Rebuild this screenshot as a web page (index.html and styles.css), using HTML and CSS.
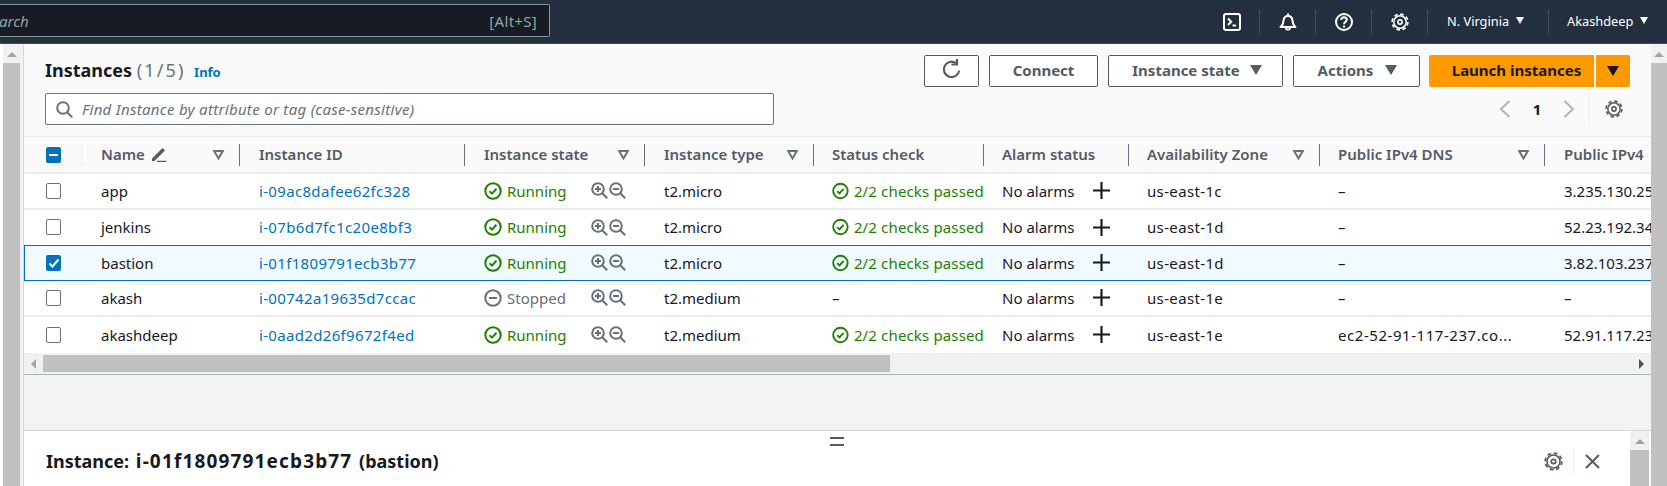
FILE: index.html
```html
<!DOCTYPE html>
<html lang="en">
  <head>
    <meta charset="utf-8" />
    <title>Instances | EC2</title>
    <link rel="stylesheet" href="styles.css">
  </head>
  <body>
    <svg class="defs" width="0" height="0">
      <symbol id="i-ok" viewBox="0 0 18 18"><circle cx="9" cy="9" r="7.7" fill="none" stroke="currentColor" stroke-width="2"/><path d="M5.6 9.2l2.4 2.4 4.4-4.8" fill="none" stroke="currentColor" stroke-width="2"/></symbol>
      <symbol id="i-stop" viewBox="0 0 18 18"><circle cx="9" cy="9" r="7.7" fill="none" stroke="currentColor" stroke-width="2"/><path d="M5 9h8" fill="none" stroke="currentColor" stroke-width="2"/></symbol>
      <symbol id="i-zin" viewBox="0 0 17 17"><circle cx="7" cy="7" r="5.8" fill="none" stroke="currentColor" stroke-width="2"/><path d="M11.2 11.2l5 5M4 7h6M7 4v6" fill="none" stroke="currentColor" stroke-width="2"/></symbol>
      <symbol id="i-zout" viewBox="0 0 17 17"><circle cx="7" cy="7" r="5.8" fill="none" stroke="currentColor" stroke-width="2"/><path d="M11.2 11.2l5 5M4 7h6" fill="none" stroke="currentColor" stroke-width="2"/></symbol>
      <symbol id="i-plus" viewBox="0 0 16 16"><path d="M8 0v16M0 8h16" fill="none" stroke="currentColor" stroke-width="2"/></symbol>
      <symbol id="i-gear" viewBox="0 0 18 18"><circle cx="9" cy="9" r="7.9" fill="none" stroke="currentColor" stroke-width="1.6" stroke-dasharray="3.6 2.6"/><circle cx="9" cy="9" r="6.2" fill="none" stroke="currentColor" stroke-width="1.5"/><circle cx="9" cy="9" r="2.1" fill="none" stroke="currentColor" stroke-width="1.6"/></symbol>
      <symbol id="i-filter" viewBox="0 0 11 10"><path d="M1.2 1h8.6L5.5 8.4z" fill="none" stroke="currentColor" stroke-width="2"/></symbol>
    </svg>

    <header class="topbar">
      <div class="search-box">
        <span class="search-word">arch</span>
        <span class="search-key">[Alt+S]</span>
      </div>
      <div class="top-actions">
        <div class="top-icon">
          <svg width="18" height="18" viewBox="0 0 18 18"><rect x="1" y="1" width="16" height="16" rx="2" fill="none" stroke="#fff" stroke-width="2"/><path d="M5 5.5l3.2 3.2L5 12M9.5 12.5H13" fill="none" stroke="#fff" stroke-width="2"/></svg>
        </div>
        <div class="top-icon">
          <svg width="18" height="18" viewBox="0 0 18 18"><path d="M1.5 14c2.400-1.600 2.700-3.400 3-6.400.3-2.800 2-4.600 4.500-4.600s4.200 1.800 4.500 4.600c.3 3 .6 4.800 3 6.400z" fill="none" stroke="#fff" stroke-width="2" stroke-linejoin="round"/><path d="M6.800 14.500a2.200 2.200 0 0 0 4.400 0" fill="none" stroke="#fff" stroke-width="1.800"/><path d="M9 .5v2.500" stroke="#fff" stroke-width="2"/></svg>
        </div>
        <div class="top-icon">
          <svg width="18" height="18" viewBox="0 0 18 18"><circle cx="9" cy="9" r="8" fill="none" stroke="#fff" stroke-width="2"/><path d="M6.200 7c0-1.700 1.300-2.700 2.800-2.700s2.800 1 2.800 2.500c0 2.200-2.800 2-2.800 4.400" fill="none" stroke="#fff" stroke-width="2"/><path d="M9 12.400v2" stroke="#fff" stroke-width="2"/></svg>
        </div>
        <div class="top-icon top-gear">
          <svg width="18" height="18"><use href="#i-gear"/></svg>
        </div>
        <div class="top-menu top-region">N. Virginia<span class="mini-caret"></span></div>
        <div class="top-menu top-user">Akashdeep<span class="mini-caret"></span></div>
      </div>
    </header>

    <div class="page">
      <div class="vscroll vscroll-left">
        <span class="arrow-up"></span>
        <span class="thumb"></span>
      </div>

      <main class="main">
        <section class="toolbar">
          <div class="tool-row">
            <h1 class="title">Instances <span class="count">(1/5)</span> <a class="info">Info</a></h1>
            <div class="buttons">
              <button class="btn btn-refresh">
                <svg width="22" height="22" viewBox="0 0 20 20"><path d="M16.500 10.500a7 7 0 1 1-3-6.800" fill="none" stroke="#545b64" stroke-width="2"/><path d="M14.500 0v5h-5" fill="none" stroke="#545b64" stroke-width="2"/></svg>
              </button>
              <button class="btn btn-connect">Connect</button>
              <button class="btn btn-state">Instance state<span class="caret"></span></button>
              <button class="btn btn-actions">Actions<span class="caret"></span></button>
              <div class="launch">
                <button class="btn-launch">Launch instances</button>
                <button class="btn-launch-arrow"><span class="caret caret-dark"></span></button>
              </div>
            </div>
          </div>
          <div class="tool-row filter-row">
            <div class="filter">
              <svg width="17" height="17" viewBox="0 0 17 17"><circle cx="7" cy="7" r="5.800" fill="none" stroke="#687078" stroke-width="2"/><path d="M11.200 11.200l5 5" stroke="#687078" stroke-width="2"/></svg>
              <span>Find Instance by attribute or tag (case-sensitive)</span>
            </div>
            <div class="pager">
              <svg width="12" height="18" viewBox="0 0 12 18"><path d="M10.500 1L2 9l8.500 8" fill="none" stroke="#aab7b8" stroke-width="2"/></svg>
              <span class="page-num">1</span>
              <svg width="12" height="18" viewBox="0 0 12 18"><path d="M1.500 1L10 9l-8.500 8" fill="none" stroke="#aab7b8" stroke-width="2"/></svg>
              <div class="pager-gear"><svg width="18" height="18"><use href="#i-gear"/></svg></div>
            </div>
          </div>
        </section>

        <div class="table-wrap">
          <table class="grid">
            <colgroup>
              <col class="c-check"><col class="c-name"><col class="c-id"><col class="c-state"><col class="c-type"><col class="c-status"><col class="c-alarm"><col class="c-zone"><col class="c-dns"><col class="c-ip">
            </colgroup>
            <thead>
              <tr>
                <th><div class="head head-check"><span class="box box-mixed"></span></div></th>
                <th><div class="head"><span class="head-name">Name
                  <svg width="16" height="16" viewBox="0 0 16 16"><path d="M1 12.500L11.500 2l2.500 2.500L3.500 15H1z" fill="#545b64"/><path d="M6 15.500h9.500" stroke="#545b64" stroke-width="1.500"/></svg></span>
                  <svg class="tri" width="11" height="10"><use href="#i-filter"/></svg></div></th>
                <th><div class="head">Instance ID</div></th>
                <th><div class="head">Instance state<svg class="tri" width="11" height="10"><use href="#i-filter"/></svg></div></th>
                <th><div class="head">Instance type<svg class="tri" width="11" height="10"><use href="#i-filter"/></svg></div></th>
                <th><div class="head">Status check</div></th>
                <th><div class="head">Alarm status</div></th>
                <th><div class="head">Availability Zone<svg class="tri" width="11" height="10"><use href="#i-filter"/></svg></div></th>
                <th><div class="head">Public IPv4 DNS<svg class="tri" width="11" height="10"><use href="#i-filter"/></svg></div></th>
                <th><div class="head head-last">Public IPv4</div></th>
              </tr>
            </thead>
            <tbody>
              <tr>
                <td class="cell-check"><span class="box"></span></td>
                <td>app</td>
                <td><a class="link">i-09ac8dafee62fc328</a></td>
                <td><div class="state"><span class="run"><svg width="18" height="18"><use href="#i-ok"/></svg>Running</span><span class="zooms"><svg width="17" height="17"><use href="#i-zin"/></svg><svg width="17" height="17"><use href="#i-zout"/></svg></span></div></td>
                <td>t2.micro</td>
                <td class="checks"><span class="run"><svg width="18" height="18"><use href="#i-ok"/></svg>2/2 checks passed</span></td>
                <td><div class="alarm">No alarms<svg width="17" height="17"><use href="#i-plus"/></svg></div></td>
                <td class="zone">us-east-1c</td>
                <td>–</td>
                <td>3.235.130.25</td>
              </tr>
              <tr class="before-sel">
                <td class="cell-check"><span class="box"></span></td>
                <td>jenkins</td>
                <td><a class="link">i-07b6d7fc1c20e8bf3</a></td>
                <td><div class="state"><span class="run"><svg width="18" height="18"><use href="#i-ok"/></svg>Running</span><span class="zooms"><svg width="17" height="17"><use href="#i-zin"/></svg><svg width="17" height="17"><use href="#i-zout"/></svg></span></div></td>
                <td>t2.micro</td>
                <td class="checks"><span class="run"><svg width="18" height="18"><use href="#i-ok"/></svg>2/2 checks passed</span></td>
                <td><div class="alarm">No alarms<svg width="17" height="17"><use href="#i-plus"/></svg></div></td>
                <td class="zone">us-east-1d</td>
                <td>–</td>
                <td>52.23.192.34</td>
              </tr>
              <tr class="sel">
                <td class="cell-check"><span class="box box-on"><svg width="16" height="16" viewBox="0 0 16 16"><path d="M3.500 8.500l3 3 6-7" fill="none" stroke="#fff" stroke-width="2"/></svg></span></td>
                <td>bastion</td>
                <td><a class="link">i-01f1809791ecb3b77</a></td>
                <td><div class="state"><span class="run"><svg width="18" height="18"><use href="#i-ok"/></svg>Running</span><span class="zooms"><svg width="17" height="17"><use href="#i-zin"/></svg><svg width="17" height="17"><use href="#i-zout"/></svg></span></div></td>
                <td>t2.micro</td>
                <td class="checks"><span class="run"><svg width="18" height="18"><use href="#i-ok"/></svg>2/2 checks passed</span></td>
                <td><div class="alarm">No alarms<svg width="17" height="17"><use href="#i-plus"/></svg></div></td>
                <td class="zone">us-east-1d</td>
                <td>–</td>
                <td>3.82.103.237</td>
              </tr>
              <tr>
                <td class="cell-check"><span class="box"></span></td>
                <td>akash</td>
                <td><a class="link">i-00742a19635d7ccac</a></td>
                <td><div class="state"><span class="run stopped"><svg width="18" height="18"><use href="#i-stop"/></svg>Stopped</span><span class="zooms"><svg width="17" height="17"><use href="#i-zin"/></svg><svg width="17" height="17"><use href="#i-zout"/></svg></span></div></td>
                <td>t2.medium</td>
                <td>–</td>
                <td><div class="alarm">No alarms<svg width="17" height="17"><use href="#i-plus"/></svg></div></td>
                <td class="zone">us-east-1e</td>
                <td>–</td>
                <td>–</td>
              </tr>
              <tr>
                <td class="cell-check"><span class="box"></span></td>
                <td>akashdeep</td>
                <td><a class="link">i-0aad2d26f9672f4ed</a></td>
                <td><div class="state"><span class="run"><svg width="18" height="18"><use href="#i-ok"/></svg>Running</span><span class="zooms"><svg width="17" height="17"><use href="#i-zin"/></svg><svg width="17" height="17"><use href="#i-zout"/></svg></span></div></td>
                <td>t2.medium</td>
                <td class="checks"><span class="run"><svg width="18" height="18"><use href="#i-ok"/></svg>2/2 checks passed</span></td>
                <td><div class="alarm">No alarms<svg width="17" height="17"><use href="#i-plus"/></svg></div></td>
                <td class="zone">us-east-1e</td>
                <td class="dns">ec2-52-91-117-237.co...</td>
                <td>52.91.117.237</td>
              </tr>
            </tbody>
          </table>
        </div>

        <div class="hscroll">
          <span class="arrow-left"></span>
          <span class="hthumb"></span>
          <span class="arrow-right"></span>
        </div>

        <div class="gap-band"></div>

        <section class="detail">
          <div class="drag-handle"></div>
          <div class="detail-body">
            <h2 class="detail-title">Instance: <span class="detail-id">i-01f1809791ecb3b77</span> (bastion)</h2>
            <div class="detail-tools">
              <svg width="19" height="19"><use href="#i-gear"/></svg>
              <div class="detail-close">
                <svg width="15" height="15" viewBox="0 0 15 15"><path d="M1 1l13 13M14 1L1 14" fill="none" stroke="#545b64" stroke-width="2"/></svg>
              </div>
            </div>
          </div>
          <div class="vscroll vscroll-inner">
            <span class="arrow-up"></span>
            <span class="thumb"></span>
          </div>
        </section>
      </main>

      <div class="vscroll vscroll-right">
        <span class="arrow-up"></span>
        <span class="thumb"></span>
      </div>
    </div>
  </body>
</html>
```

FILE: styles.css
```css
* {
  box-sizing: border-box;
}

html,
body {
  margin: 0;
  height: 486px;
  overflow: hidden;
}

body {
  display: flex;
  flex-direction: column;
  font-family: "Noto Sans", "Liberation Sans", sans-serif;
  font-size: 15px;
  color: #16191f;
  background: #fff;
}

.defs {
  position: absolute;
}

/* top navigation */
.topbar {
  flex: none;
  height: 44px;
  display: flex;
  justify-content: space-between;
  background: #232f3e;
  border-bottom: 1px solid #414d5c;
}

.search-box {
  width: 550px;
  height: 33px;
  margin-top: 4px;
  padding: 0 12px 0 0;
  display: flex;
  align-items: center;
  justify-content: space-between;
  background: #161b24;
  border: 1px solid #879596;
  border-left: 0;
  border-radius: 0 2px 2px 0;
  color: #95a5a6;
}

.search-word {
  font-style: italic;
  margin-left: -1px;
}

.search-key {
  letter-spacing: 0.3px;
}

.top-actions {
  display: flex;
  align-items: center;
  color: #fff;
  font-size: 12.8px;
  height: 43px;
}

.top-icon {
  width: 56px;
  height: 26px;
  display: flex;
  align-items: center;
  justify-content: center;
  border-right: 1px solid #414d5c;
}

.top-gear svg {
  color: #fff;
}

.top-menu {
  display: flex;
  align-items: center;
  height: 26px;
  padding-bottom: 2px;
}

.top-region {
  width: 121px;
  padding-left: 19px;
  border-right: 1px solid #414d5c;
}

.top-user {
  width: 118px;
  padding-left: 18px;
}

.mini-caret {
  width: 0;
  height: 0;
  margin-left: 7px;
  border-left: 4.5px solid transparent;
  border-right: 4.5px solid transparent;
  border-top: 7px solid #fff;
}

/* page frame */
.page {
  flex: 1;
  display: flex;
  min-height: 0;
}

.main {
  flex: none;
  width: 1628px;
  display: flex;
  flex-direction: column;
  background: #fafafa;
  border-left: 1px solid #d5dbdb;
}

.vscroll {
  display: flex;
  flex-direction: column;
  align-items: center;
  background: #f1f1f1;
}

.vscroll-left {
  flex: none;
  width: 23px;
  padding: 0 3px 0 3px;
  background: linear-gradient(to right, #fff 3px, #f1f1f1 3px);
}

.vscroll-right {
  flex: 1;
}

.arrow-up {
  flex: none;
  width: 0;
  height: 0;
  margin: 8px 0 6px;
  border-left: 5px solid transparent;
  border-right: 5px solid transparent;
  border-bottom: 5px solid #a3a3a3;
}

.thumb {
  flex: 1;
  align-self: stretch;
  background: #c1c1c1;
}

/* title and actions */
.toolbar {
  flex: none;
  height: 92px;
  padding: 11px 21px 0 21px;
}

.tool-row {
  display: flex;
  justify-content: space-between;
  height: 32px;
}

.filter-row {
  margin-top: 6px;
  height: 32px;
}

.title {
  margin: 0;
  font-size: 18px;
  font-weight: 700;
  line-height: 30px;
}

.count {
  font-weight: 400;
  letter-spacing: 2.1px;
  color: #687078;
}

.info {
  margin-left: 4px;
  font-size: 13px;
  color: #0073bb;
}

.buttons {
  display: flex;
  gap: 10px;
}

.btn {
  height: 32px;
  display: flex;
  align-items: center;
  justify-content: center;
  padding: 0 0 2px;
  font: 700 15px "Noto Sans", "Liberation Sans", sans-serif;
  color: #545b64;
  background: #fff;
  border: 1px solid #545b64;
  border-radius: 2px;
}

.btn-refresh {
  width: 55px;
}

.btn-connect {
  width: 109px;
}

.btn-state {
  width: 175px;
  padding-left: 3px;
}

.btn-state .caret {
  margin-left: 10px;
}

.btn-actions {
  width: 127px;
  padding-left: 2px;
}

.caret {
  width: 0;
  height: 0;
  margin-left: 12px;
  border-left: 6.5px solid transparent;
  border-right: 6.5px solid transparent;
  border-top: 10px solid #545b64;
}

.caret-dark {
  margin: 0;
  border-top-color: #16191f;
}

.launch {
  display: flex;
  gap: 2px;
  margin-left: -1px;
}

.btn-launch,
.btn-launch-arrow {
  height: 32px;
  display: flex;
  align-items: center;
  justify-content: center;
  padding: 0;
  border: 0;
  font: 700 15px "Noto Sans", "Liberation Sans", sans-serif;
  color: #16191f;
  background: #f90;
}

.btn-launch {
  width: 165px;
  padding: 0 0 2px 10px;
  border-radius: 2px 0 0 2px;
}

.btn-launch-arrow {
  width: 34px;
  border-radius: 0 2px 2px 0;
}

.filter {
  width: 729px;
  height: 32px;
  padding-left: 10px;
  display: flex;
  align-items: center;
  gap: 9px;
  font-style: italic;
  letter-spacing: 0.3px;
  color: #687078;
  background: #fff;
  border: 1px solid #687078;
  border-radius: 2px;
}

.pager {
  display: flex;
  align-items: center;
  height: 32px;
  color: #16191f;
  font-weight: 700;
}

.page-num {
  width: 52px;
  text-align: center;
}

.pager-gear {
  height: 32px;
  margin-left: 14px;
  padding: 0 7px 0 15px;
  display: flex;
  align-items: center;
  color: #545b64;
  border-left: 1px solid #eaeded;
}

/* instances table */
.table-wrap {
  flex: none;
  height: 217px;
  overflow: hidden;
}

.grid {
  table-layout: fixed;
  width: 1720px;
  border-collapse: separate;
  border-spacing: 0;
  background: #fff;
}

.c-check { width: 58px; }
.c-name { width: 158px; }
.c-id { width: 225px; }
.c-state { width: 180px; }
.c-type { width: 169px; }
.c-status { width: 170px; }
.c-alarm { width: 145px; }
.c-zone { width: 191px; }
.c-dns { width: 225px; }
.c-ip { width: 199px; }

th {
  height: 38px;
  padding: 0;
  background: #fafafa;
  border-top: 1px solid #eaeded;
  border-bottom: 2px solid #eaeded;
  font-weight: 600;
  text-align: left;
  color: #545b64;
}

.head {
  height: 22px;
  padding: 0 15px 2px 19px;
  display: flex;
  align-items: center;
  justify-content: space-between;
  border-right: 1px solid #687078;
  white-space: nowrap;
}

.head-check {
  padding: 0 0 0 22px;
  border-right-color: #eaeded;
}

.head-last {
  border-right: 0;
}

.head-name {
  display: flex;
  align-items: center;
  gap: 6px;
}

.tri {
  flex: none;
  margin-top: 2px;
  color: #687078;
}

td {
  height: 36px;
  padding: 0 0 1px 19px;
  background: #fff;
  border-bottom: 2px solid #eaeded;
  white-space: nowrap;
  overflow: hidden;
}

th:nth-child(n+6):nth-child(-n+9) .head,
td:nth-child(n+6):nth-child(-n+9) {
  padding-left: 18px;
}

th:nth-child(7) .head,
td:nth-child(7) {
  padding-left: 17px;
}

.cell-check {
  padding-left: 22px;
}

tr:last-child td {
  border-bottom: 0;
}

.before-sel td {
  border-bottom: 1px solid #0073bb;
}

.sel td {
  height: 35px;
  background: #f1faff;
  border-bottom: 1px solid #0073bb;
}

.sel .cell-check {
  border-left: 1px solid #0073bb;
  padding-left: 21px;
}

.box {
  display: block;
  width: 15px;
  height: 16px;
  background: #fff;
  border: 1px solid #687078;
  border-radius: 2px;
}

.box-mixed {
  position: relative;
  background: #0073bb;
  border-color: #0073bb;
}

.box-mixed::after {
  content: "";
  position: absolute;
  left: 2px;
  right: 2px;
  top: 6px;
  height: 2px;
  background: #fff;
}

.box-on {
  background: #0073bb;
  border: 0;
}

.link {
  letter-spacing: 0.33px;
  color: #0073bb;
}

.zone {
  letter-spacing: 0.35px;
}

.dns {
  letter-spacing: 0.55px;
}

.checks {
  letter-spacing: 0.15px;
}

.state {
  display: flex;
  justify-content: space-between;
  padding-right: 19px;
}

.run {
  display: flex;
  align-items: center;
  gap: 5px;
  color: #1d8102;
}

.stopped {
  color: #687078;
}

.zooms {
  display: flex;
  align-items: center;
  gap: 1px;
  color: #687078;
}

.alarm {
  display: flex;
  align-items: center;
  gap: 19px;
}

/* horizontal scrollbar */
.hscroll {
  flex: none;
  height: 22px;
  padding-top: 2px;
  display: flex;
  align-items: flex-start;
  background: #f1f1f1;
  border-bottom: 1px solid #aab7b8;
}

.arrow-left,
.arrow-right {
  width: 0;
  height: 0;
  margin-top: 4px;
  border-top: 5px solid transparent;
  border-bottom: 5px solid transparent;
}

.arrow-left {
  margin-left: 7px;
  border-right: 5px solid #a3a3a3;
}

.hthumb {
  width: 847px;
  height: 17px;
  margin-left: 7px;
  background: #c1c1c1;
}

.arrow-right {
  margin-left: auto;
  margin-right: 7px;
  border-left: 5px solid #505050;
}

.gap-band {
  flex: none;
  height: 55px;
  background: #f2f3f3;
}

/* split panel */
.detail {
  flex: 1;
  position: relative;
  display: flex;
  min-height: 0;
  background: #fff;
  border-top: 1px solid #d5dbdb;
}

.drag-handle {
  position: absolute;
  left: 806px;
  top: 6px;
  width: 14px;
  height: 9px;
  border-top: 2px solid #545b64;
  border-bottom: 2px solid #545b64;
}

.detail-body {
  flex: 1;
  height: 24px;
  margin-top: 18px;
  padding: 0 30px 0 22px;
  display: flex;
  align-items: center;
  justify-content: space-between;
}

.detail-title {
  margin: 0;
  font-size: 18px;
  font-weight: 700;
  word-spacing: 2px;
}

.detail-id {
  font-size: 19px;
  letter-spacing: 1.15px;
}

.detail-tools {
  display: flex;
  align-items: center;
  gap: 10px;
  color: #545b64;
}

.detail-close {
  height: 27px;
  padding-left: 11px;
  display: flex;
  align-items: center;
  border-left: 1px solid #eaeded;
}

.vscroll-inner {
  flex: none;
  width: 19px;
  margin-right: 2px;
}
```
